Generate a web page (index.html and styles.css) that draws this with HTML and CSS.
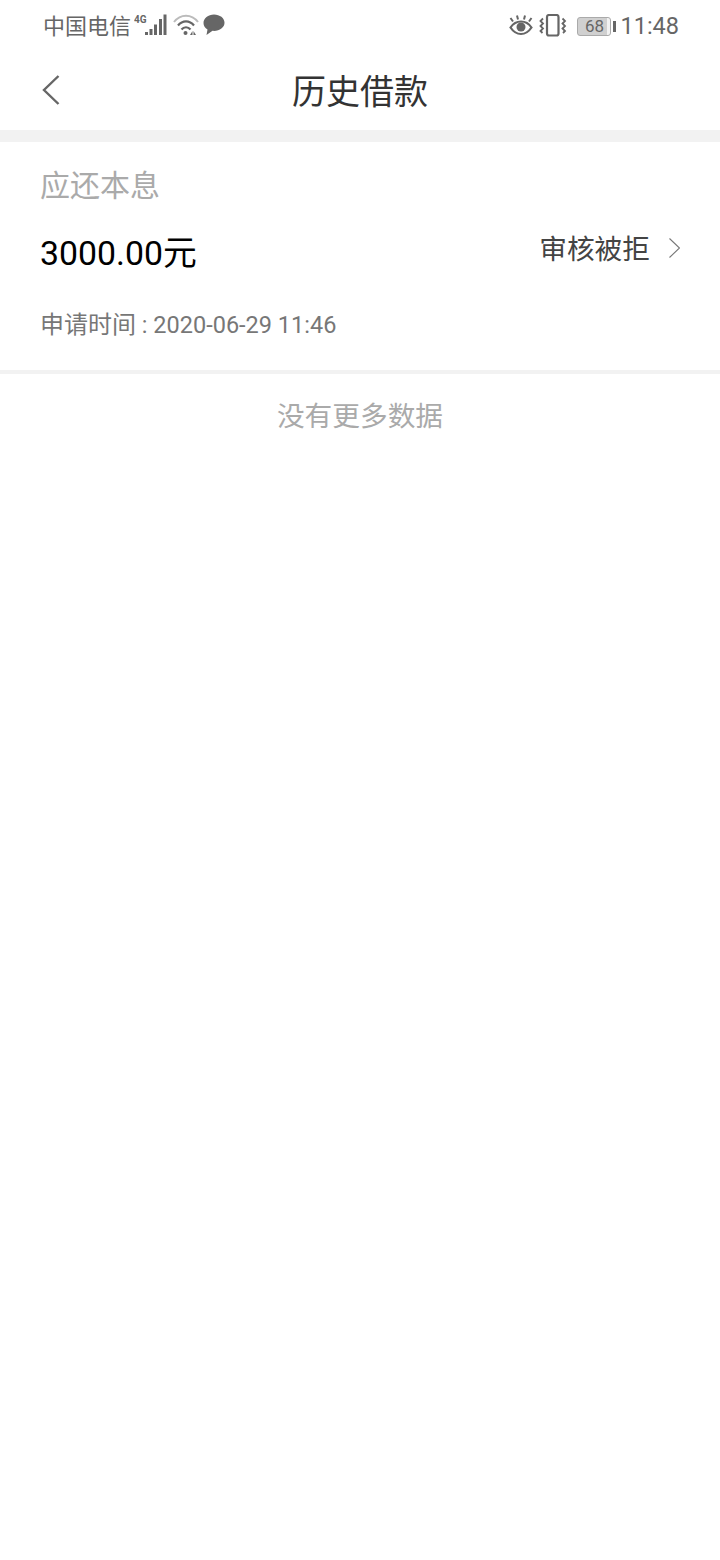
FILE: index.html
```html
<!DOCTYPE html>
<html lang="zh-CN">
<head>
    <meta charset="UTF-8">
    <meta name="viewport" content="width=device-width, initial-scale=1.0">
    <title>历史借款</title>
    <link rel="stylesheet" href="styles.css">
</head>
<body>
    <div class="status-bar">
        <div class="status-left">
            <span class="carrier">中国电信</span>
            <svg class="icon-signal" width="34" height="24" viewBox="0 0 34 24">
                <text x="0" y="9" class="net-label">4G</text>
                <rect x="11" y="18" width="3" height="3" fill="#666"/>
                <rect x="15.500" y="15" width="3" height="6" fill="#666"/>
                <rect x="20" y="10.500" width="3" height="10.500" fill="#666"/>
                <rect x="25" y="5" width="3" height="16" fill="#666"/>
                <rect x="29.500" y="0.500" width="3" height="20.500" fill="#666"/>
            </svg>
            <svg class="icon-wifi" width="26" height="24" viewBox="0 0 26 24" fill="none">
                <path d="M1 8C7.500 -0.500 18.500 -0.500 25 8" stroke="#bbb" stroke-width="2"/>
                <path d="M5 11.500C9.500 6 16.500 6 21 11.500" stroke="#666" stroke-width="2.200"/>
                <path d="M8.500 15.500C11 12.500 15 12.500 17.500 15.500" stroke="#666" stroke-width="2.200"/>
                <circle cx="12.500" cy="19" r="2" fill="#666"/>
                <path d="M17 21l2.500-4v4zM20.500 17l2.500 4h-2.500z" fill="#666"/>
            </svg>
            <svg class="icon-chat" width="22" height="24" viewBox="0 0 22 24">
                <path d="M11 0.500C5.200 0.500 0.500 4.200 0.500 9c0 2.800 1.500 5.100 4 6.600L3.500 21l6-4.200c.5.100 1 .100 1.500 .100 5.800 0 10.500-3.600 10.500-8.200S16.800 0.500 11 0.500z" fill="#666"/>
            </svg>
        </div>
        <div class="status-right">
            <svg class="icon-eye" width="24" height="24" viewBox="0 0 24 24" fill="none">
                <path d="M1.500 13.500C4.500 9 8 7.500 12 7.500s7.500 1.500 10.500 6C19.500 18 16 20 12 20s-7.500-2-10.500-6.500z" stroke="#666" stroke-width="2.200"/>
                <circle cx="12" cy="13" r="4.500" fill="#666"/>
                <path d="M1.500 4l2.500 3.500M8 1.500l1 4M16 1.500l-1 4M22.500 4L20 7.500" stroke="#666" stroke-width="2"/>
            </svg>
            <svg class="icon-vibrate" width="28" height="24" viewBox="0 0 28 24" fill="none">
                <rect x="8" y="1" width="11.500" height="20.500" rx="2" stroke="#666" stroke-width="2.200"/>
                <path d="M4 4.500l-2.500 2.500 2.500 2.500-2.500 2.500 2.500 2.500-2.500 2.500 2 2M23.500 4.500l2.500 2.500-2.500 2.500 2.500 2.500-2.500 2.500 2.500 2.500-2 2" stroke="#666" stroke-width="1.800"/>
            </svg>
            <div class="battery">
                <div class="battery-body"><span class="battery-level">68</span></div>
                <div class="battery-tip"></div>
            </div>
            <span class="clock">11:48</span>
        </div>
    </div>

    <div class="nav-bar">
        <svg class="nav-back" width="18" height="30" viewBox="0 0 18 30" fill="none">
            <path d="M16.500 1L2 15l14.500 14" stroke="#666" stroke-width="2.400"/>
        </svg>
        <h1 class="nav-title">历史借款</h1>
    </div>

    <div class="loan-card">
        <div class="loan-label">应还本息</div>
        <div class="loan-row">
            <div class="loan-amount">3000.00元</div>
            <div class="loan-status">
                <span>审核被拒</span>
                <svg class="loan-arrow" width="11" height="20" viewBox="0 0 11 20" fill="none">
                    <path d="M0.500 0.500l10 9.500-10 9.500" stroke="#777" stroke-width="1.100"/>
                </svg>
            </div>
        </div>
        <div class="loan-time"><span class="loan-time-label">申请时间</span> : 2020-06-29 11:46</div>
    </div>

    <div class="no-more">没有更多数据</div>
</body>
</html>
```

FILE: styles.css
```css
body {
    margin: 0;
    height: 1560px;
    background: #fff;
    font-family: Roboto, "Noto Sans CJK SC", sans-serif;
    overflow: hidden;
}
.status-bar {
    height: 52px;
    padding: 0 41px 0 43px;
    display: flex;
    align-items: center;
    justify-content: space-between;
    color: #666;
}
.status-left, .status-right {
    display: flex;
    align-items: center;
}
.carrier {
    margin-bottom: 4px;
    font-size: 22px;
}
.icon-signal {
    margin-left: 3px;
}
.net-label {
    font-size: 10px;
    font-weight: 700;
    fill: #666;
}
.icon-wifi {
    margin-left: 5px;
}
.icon-chat {
    margin-left: 4px;
}
.icon-vibrate {
    margin-left: 6px;
}
.battery {
    margin-left: 10px;
    display: flex;
    align-items: center;
}
.battery-body {
    width: 34px;
    height: 19px;
    box-sizing: border-box;
    border: 1px solid #aaa;
    border-radius: 3px;
    background: linear-gradient(to right, #d0d0d0 90%, #f2f2f2 90%);
    display: flex;
    align-items: center;
    justify-content: center;
}
.battery-level {
    font-size: 17px;
    color: #666;
}
.battery-tip {
    width: 3px;
    height: 11px;
    margin-left: 2px;
    background: #666;
}
.clock {
    margin-left: 4px;
    font-size: 23.500px;
}
.nav-bar {
    height: 74px;
    padding-bottom: 4px;
    position: relative;
    display: flex;
    align-items: center;
    justify-content: center;
    border-bottom: 12px solid #f2f2f2;
}
.nav-back {
    position: absolute;
    left: 42px;
    top: 23px;
}
.nav-title {
    margin: 0;
    font-size: 34px;
    font-weight: 400;
    color: #333;
}
.loan-card {
    height: 228px;
    padding: 0 40px;
    border-bottom: 4px solid #f2f2f2;
}
.loan-label {
    padding-top: 24px;
    font-size: 30px;
    line-height: 40px;
    color: #aaa;
}
.loan-row {
    margin-top: 24px;
    display: flex;
    justify-content: space-between;
    align-items: flex-start;
}
.loan-amount {
    font-size: 33.800px;
    line-height: 48px;
    color: #000;
}
.loan-status {
    padding-top: 1px;
    display: flex;
    align-items: center;
    gap: 19px;
    font-size: 27.700px;
    line-height: 38px;
    color: #444;
}
.loan-arrow {
    margin-bottom: 4px;
}
.loan-time {
    margin-top: 30px;
    font-size: 23.500px;
    line-height: 34px;
    color: #777;
}
.loan-time-label {
    font-size: 24px;
}
.no-more {
    margin-top: 24px;
    text-align: center;
    font-size: 27.700px;
    line-height: 38px;
    color: #aaa;
}
```
